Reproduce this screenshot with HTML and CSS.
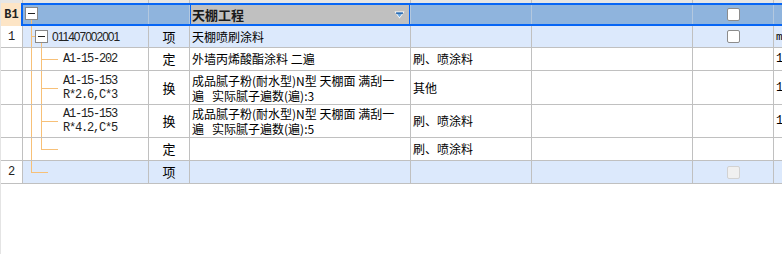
FILE: index.html
```html
<!DOCTYPE html>
<html lang="zh-CN">
<head>
    <meta charset="UTF-8">
    <title>清单定额</title>
    <link rel="stylesheet" href="styles.css">
</head>
<body>
    <div class="page">
        <div class="grid">
            <!-- header strip (cut off at top) -->
            <div class="row row-head">
                <div class="cell"></div><div class="cell"></div><div class="cell"></div><div class="cell"></div>
                <div class="cell"></div><div class="cell"></div><div class="cell"></div><div class="cell"></div>
            </div>

            <!-- B1 section row, selected -->
            <div class="row row-b1">
                <div class="cell num b1">B1</div>
                <div class="cell tree">
                    <span class="ln v0 from-box0"></span>
                    <span class="box box0"></span>
                </div>
                <div class="cell type"></div>
                <div class="cell name focus">
                    <span class="title">天棚工程</span>
                    <svg class="dd" width="11" height="8" viewBox="0 0 11 8">
                        <polygon points="0.5,0.5 10.5,0.5 5.5,7.5" fill="#ffffff"/>
                        <polygon points="2,1.5 9,1.5 5.5,6.3" fill="#6aa6de"/>
                        <rect x="2" y="1.5" width="7" height="1.3" fill="#1f5fa8"/>
                    </svg>
                </div>
                <div class="cell"></div>
                <div class="cell"></div>
                <div class="cell check"><span class="cb"></span></div>
                <div class="cell"></div>
            </div>

            <!-- 清单 row 1 -->
            <div class="row row-item">
                <div class="cell num">1</div>
                <div class="cell tree">
                    <span class="ln v0"></span>
                    <span class="ln h0-box"></span>
                    <span class="box box1"></span>
                    <span class="ln v1 from-box1"></span>
                    <span class="code-item">011407002001</span>
                </div>
                <div class="cell type">项</div>
                <div class="cell name">天棚喷刷涂料</div>
                <div class="cell"></div>
                <div class="cell"></div>
                <div class="cell check"><span class="cb"></span></div>
                <div class="cell extra">m2</div>
            </div>

            <div class="row row-sub">
                <div class="cell num"></div>
                <div class="cell tree">
                    <span class="ln v0"></span>
                    <span class="ln v1"></span>
                    <span class="ln h1"></span>
                    <span class="code">A1-15-202</span>
                </div>
                <div class="cell type">定</div>
                <div class="cell name">外墙丙烯酸酯涂料 二遍</div>
                <div class="cell">刷、喷涂料</div>
                <div class="cell"></div>
                <div class="cell"></div>
                <div class="cell extra mono">1</div>
            </div>

            <div class="row row-sub tall row-3">
                <div class="cell num"></div>
                <div class="cell tree">
                    <span class="ln v0"></span>
                    <span class="ln v1"></span>
                    <span class="ln h1"></span>
                    <span class="code">A1-15-153<br>R*2.6,C*3</span>
                </div>
                <div class="cell type">换</div>
                <div class="cell name wrap">成品腻子粉(耐水型)N型 天棚面 满刮一<br>遍&nbsp;&nbsp;&nbsp;实际腻子遍数(遍):3</div>
                <div class="cell">其他</div>
                <div class="cell"></div>
                <div class="cell"></div>
                <div class="cell extra mono">1</div>
            </div>

            <div class="row row-sub tall row-4">
                <div class="cell num"></div>
                <div class="cell tree">
                    <span class="ln v0"></span>
                    <span class="ln v1"></span>
                    <span class="ln h1"></span>
                    <span class="code">A1-15-153<br>R*4.2,C*5</span>
                </div>
                <div class="cell type">换</div>
                <div class="cell name wrap">成品腻子粉(耐水型)N型 天棚面 满刮一<br>遍&nbsp;&nbsp;&nbsp;实际腻子遍数(遍):5</div>
                <div class="cell">刷、喷涂料</div>
                <div class="cell"></div>
                <div class="cell"></div>
                <div class="cell extra mono">1</div>
            </div>

            <div class="row row-sub">
                <div class="cell num"></div>
                <div class="cell tree">
                    <span class="ln v0"></span>
                    <span class="ln v1 half"></span>
                    <span class="ln h1"></span>
                </div>
                <div class="cell type">定</div>
                <div class="cell name"></div>
                <div class="cell">刷、喷涂料</div>
                <div class="cell"></div>
                <div class="cell"></div>
                <div class="cell extra"></div>
            </div>

            <!-- 清单 row 2 -->
            <div class="row row-item row-last">
                <div class="cell num">2</div>
                <div class="cell tree">
                    <span class="ln v0 half"></span>
                    <span class="ln h0"></span>
                </div>
                <div class="cell type">项</div>
                <div class="cell name"></div>
                <div class="cell"></div>
                <div class="cell"></div>
                <div class="cell check"><span class="cb disabled"></span></div>
                <div class="cell extra"></div>
            </div>
        </div>
    </div>
</body>
</html>
```

FILE: styles.css
```css
/* Page */
body {
    margin: 0;
    background: #ffffff;
    font-family: "Noto Sans CJK SC", "Noto Sans", sans-serif;
    font-size: 12px;
    color: #000;
    overflow: hidden;
}

.page {
    height: 254px;
    border-left: 1px solid #e4e4e4;
    box-sizing: border-box;
    overflow: hidden;
}

/* Grid */
.grid {
    width: 781px;
}

.row {
    display: grid;
    grid-template-columns: 22px 126px 41px 221px 121px 161px 81px 1fr;
    height: 23px;
    position: relative;
}

.cell {
    border-right: 1px solid #c0c0c0;
    border-bottom: 1px solid #c0c0c0;
    display: flex;
    align-items: center;
    overflow: hidden;
    white-space: nowrap;
    line-height: 14px;
    padding-left: 2px;
    position: relative;
    box-sizing: border-box;
    min-width: 0;
}

.cell:last-child {
    border-right: none;
}

/* header strip, only a sliver visible */
.row-head {
    height: 3px;
    background: #e6e6e6;
}

.row-head .cell {
    border-bottom: none;
}

/* Selected section row */
.row-b1 {
    height: 23px;
    background: #8fb4dd;
}

.row-b1 .cell {
    border-bottom: none;
    border-right-color: #b3c8df;
}

.row-b1::after {
    content: '';
    position: absolute;
    left: 20px;
    right: -4px;
    top: 0;
    bottom: 0;
    border: 2px solid #0766f5;
    pointer-events: none;
}

.b1 {
    background: #fde5c6;
    font-family: "Liberation Serif", serif;
    font-weight: bold;
    font-size: 13px;
    justify-content: center;
    padding-left: 0;
}

.focus {
    background: #c0c0c0;
    justify-content: space-between;
    padding-right: 5px;
}

.focus::after {
    content: '';
    position: absolute;
    left: -1px;
    right: -1px;
    top: 0;
    bottom: 0;
    border-left: 2px solid #0766f5;
    border-right: 2px solid #0766f5;
}

.title {
    font-weight: bold;
    font-size: 13px;
    color: #1a1a1a;
}

.dd {
    display: block;
}

/* item rows */
.row-item {
    height: 22px;
    background: #dce9fc;
}

.row-last {
    height: 23px;
}

.row-item .num {
    background: #fff;
}

.row-sub.tall {
    height: 34px;
}

.row-4.tall {
    height: 33px;
}

.num {
    justify-content: center;
    padding-left: 0;
    font-family: "Liberation Mono", monospace;
    font-size: 12px;
    color: #222;
}

.type {
    justify-content: center;
    padding-left: 0;
    font-size: 13px;
}

.name {
    padding-left: 2px;
}

.wrap {
    line-height: 15px;
}

.extra {
    padding-left: 2px;
    font-family: "Liberation Mono", monospace;
    font-size: 11px;
}

.extra.mono {
    font-size: 12px;
}

/* Tree column */
.tree {
    padding-left: 0;
}

.ln {
    position: absolute;
    background: #f7c077;
}

.v0 {
    left: 8px;
    width: 1px;
    top: 0;
    bottom: -1px;
}

.v1 {
    left: 18px;
    width: 1px;
    top: 0;
    bottom: -1px;
}

.v0.half,
.v1.half {
    bottom: 50%;
}

.v0.from-box0 {
    top: 17px;
    bottom: 0;
}

.v1.from-box1 {
    top: 17px;
}

.h0 {
    left: 8px;
    width: 17px;
    top: 50%;
    height: 1px;
}

.h0-box {
    left: 8px;
    width: 4px;
    top: 10px;
    height: 1px;
}

.h1 {
    left: 18px;
    width: 17px;
    top: 50%;
    height: 1px;
}

.box {
    position: absolute;
    width: 13px;
    height: 13px;
    box-sizing: border-box;
    border: 1px solid #888;
    background: #fff;
}

.box::after {
    content: '';
    position: absolute;
    left: 2px;
    right: 2px;
    top: 5px;
    height: 1px;
    background: #222;
}

.box0 {
    left: 2px;
    top: 4px;
}

.box1 {
    left: 12px;
    top: 4px;
}

.code-item {
    margin-left: 29px;
    font-family: "Liberation Sans", sans-serif;
    font-size: 12px;
    letter-spacing: -1px;
    color: #222;
}

.code {
    margin-left: 40px;
    font-family: "Liberation Mono", monospace;
    font-size: 12px;
    letter-spacing: -1.2px;
    line-height: 14px;
    color: #222;
}

/* Checkboxes */
.check {
    justify-content: center;
    padding-left: 0;
}

.cb {
    width: 13px;
    height: 13px;
    box-sizing: border-box;
    border: 1px solid #8c8c8c;
    border-radius: 2px;
    background: #fff;
}

.cb.disabled {
    background: #f0f0f0;
    border-color: #d2d2d2;
}
```
